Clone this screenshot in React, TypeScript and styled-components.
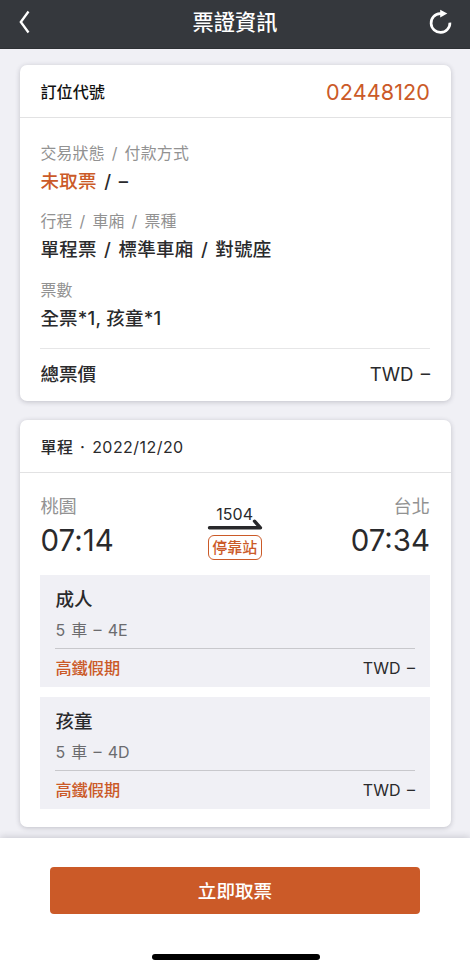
import React from 'react';
import styled, { createGlobalStyle } from 'styled-components';

const ORANGE = '#cb5a28';

const GlobalStyle = createGlobalStyle`
  * { box-sizing: border-box; }
  body {
    margin: 0;
    background: #f0f0f5;
    font-family: Inter, 'Noto Sans CJK TC', sans-serif;
    color: #2a2a2c;
  }
`;

const Screen = styled.div`
  width: 470px;
  height: 970px;
  display: flex;
  flex-direction: column;
  background: #f0f0f5;
  overflow: hidden;
`;

const NavBar = styled.header`
  height: 49px;
  flex: none;
  display: grid;
  grid-template-columns: 60px 1fr 60px;
  align-items: center;
  background: #35383d;
  border-bottom: 1px solid #2d3034;
  color: #fff;
`;

const NavTitle = styled.h1`
  margin: 0;
  padding-bottom: 4px;
  text-align: center;
  font-size: 21.2px;
  line-height: 30px;
  font-weight: 500;
`;

const NavButton = styled.button<{ $end?: boolean }>`
  display: flex;
  justify-content: ${(p) => (p.$end ? 'flex-end' : 'flex-start')};
  padding: ${(p) => (p.$end ? '0 17px 4px 0' : '0 0 5px 17px')};
  border: 0;
  background: none;
  color: inherit;
`;

const Content = styled.main`
  flex: none;
  height: 789px;
  padding: 16px 19px 0 20px;
  display: flex;
  flex-direction: column;
  gap: 19px;
`;

const Card = styled.section<{ $height: number }>`
  height: ${(p) => p.$height}px;
  flex: none;
  background: #fff;
  border-radius: 7px;
  box-shadow: 0 1px 5px rgba(40, 40, 60, 0.24);
`;

const CardHeader = styled.div`
  height: 53px;
  padding: 2px 21px 0 20.5px;
  display: flex;
  align-items: center;
  justify-content: space-between;
  border-bottom: 1px solid #e2e2e3;
`;

const CardBody = styled.div<{ $top: number }>`
  padding: ${(p) => p.$top}px 21px 0 20.4px;
`;

const Text = styled.span<{
  $size: number;
  $line?: number;
  $weight?: number;
  $color?: string;
  $track?: number;
  $gap?: number;
}>`
  display: block;
  white-space: pre;
  font-size: ${(p) => p.$size}px;
  line-height: ${(p) => p.$line ?? 24}px;
  font-weight: ${(p) => p.$weight ?? 400};
  color: ${(p) => p.$color ?? 'inherit'};
  letter-spacing: ${(p) => p.$track ?? 0}px;
  word-spacing: ${(p) => p.$gap ?? 0}px;
  margin-right: ${(p) => -(p.$track ?? 0)}px;
`;

const Accent = styled.span`
  color: ${ORANGE};
`;

const Regular = styled.span`
  font-weight: 400;
`;

const Field = styled.div`
  height: 68.4px;
`;

const TotalRow = styled.div`
  height: 51px;
  margin-top: 1px;
  display: flex;
  align-items: center;
  justify-content: space-between;
  border-top: 1px solid #e6e6e7;
`;

const Journey = styled.div`
  height: 81px;
  display: flex;
  justify-content: space-between;
`;

const Station = styled.div<{ $end?: boolean }>`
  width: 90px;
  display: flex;
  flex-direction: column;
  align-items: ${(p) => (p.$end ? 'flex-end' : 'flex-start')};
`;

const Train = styled.div`
  display: flex;
  flex-direction: column;
  align-items: center;
  padding: 8px 1px 0 0;
`;

const Arrow = styled.svg`
  display: block;
  margin-top: -8px;
`;

const StopsButton = styled.button`
  width: 54px;
  height: 25px;
  margin-top: 5px;
  padding: 0;
  border: 1.5px solid ${ORANGE};
  border-radius: 6px;
  background: #fff;
  color: ${ORANGE};
  font: 500 15px/21px Inter, 'Noto Sans CJK TC', sans-serif;
`;

const Passenger = styled.div`
  height: 112px;
  margin-bottom: 10px;
  padding: 11px 15px 0;
  background: #f0f0f5;
`;

const PassengerInfo = styled.div`
  height: 63px;
  border-bottom: 1px solid #c8c8cc;
`;

const FareRow = styled.div`
  height: 37px;
  display: flex;
  align-items: center;
  justify-content: space-between;
`;

const Footer = styled.footer`
  flex: 1;
  display: flex;
  flex-direction: column;
  align-items: center;
  padding-top: 29px;
  background: #fff;
  box-shadow: 0 -1px 7px rgba(40, 40, 60, 0.2);
`;

const PrimaryButton = styled.button`
  width: 370px;
  height: 47px;
  padding: 2px 0 0;
  border: 0;
  border-radius: 4px;
  background: ${ORANGE};
  color: #fff;
  font: 500 18.6px/45px Inter, 'Noto Sans CJK TC', sans-serif;
`;

const HomeIndicator = styled.div`
  width: 168px;
  height: 6px;
  margin: 40px 0 0 2px;
  border-radius: 3px;
  background: #000;
`;

const fields = [
  { label: '交易狀態 / 付款方式', accent: '未取票', value: ' / –', track: 0.3, gap: 2.2 },
  { label: '行程 / 車廂 / 票種', accent: '', value: '單程票 / 標準車廂 / 對號座', track: 0.25, gap: 2.2 },
  { label: '票數', accent: '', value: '全票*1, 孩童*1', track: 0.2, gap: 0 },
];

const passengers = [
  { type: '成人', seat: '5 車 – 4E' },
  { type: '孩童', seat: '5 車 – 4D' },
];

export default function App() {
  return (
    <>
      <GlobalStyle />
      <Screen>
        <NavBar>
          <NavButton aria-label="返回">
            <svg width="14" height="24" viewBox="0 0 14 24" fill="none" stroke="currentColor" strokeWidth="2.3">
              <path d="M11.5 1.5 3.8 12l7.7 10.5" />
            </svg>
          </NavButton>
          <NavTitle>票證資訊</NavTitle>
          <NavButton $end aria-label="重新整理">
            <svg width="26" height="26" viewBox="0 0 26 26" fill="none">
              <path d="M14.5 4.6H13A9.4 9.4 0 1 0 22.9 13.6" stroke="currentColor" strokeWidth="2.7" />
              <path d="M13.2 0.7 20.3 4.6 13.2 8.6Z" fill="currentColor" />
            </svg>
          </NavButton>
        </NavBar>

        <Content>
          <Card $height={336}>
            <CardHeader>
              <Text $size={16.1} $weight={500} $color="#111">訂位代號</Text>
              <Text $size={21.6} $color={ORANGE} $track={0.1}>02448120</Text>
            </CardHeader>
            <CardBody $top={24}>
              {fields.map((f) => (
                <Field key={f.label}>
                  <Text $size={15.9} $color="#929292" $track={0.2} $gap={2.3}>{f.label}</Text>
                  <Text $size={18.5} $line={31.5} $weight={450} $track={f.track} $gap={f.gap}>
                    {f.accent && <Accent>{f.accent}</Accent>}
                    {f.value}
                  </Text>
                </Field>
              ))}
              <TotalRow>
                <Text $size={18.6} $weight={500}>總票價</Text>
                <Text $size={18.6} $gap={2}>TWD –</Text>
              </TotalRow>
            </CardBody>
          </Card>

          <Card $height={407}>
            <CardHeader>
              <Text $size={16} $weight={500} $track={0.45} $gap={2}>
                單程 · <Regular>2022/12/20</Regular>
              </Text>
            </CardHeader>
            <CardBody $top={21}>
              <Journey>
                <Station>
                  <Text $size={18.2} $color="#929292">桃園</Text>
                  <Text $size={29.4} $line={46} $track={0.1}>07:14</Text>
                </Station>
                <Train>
                  <Text $size={16} $track={0.1}>1504</Text>
                  <Arrow width="56" height="12" viewBox="0 0 56 12" fill="none" stroke="#29292b" strokeWidth="3.4" strokeLinecap="round">
                    <path d="M2.5 9.8H53.5L47.5 3.2" strokeLinejoin="round" />
                  </Arrow>
                  <StopsButton>停靠站</StopsButton>
                </Train>
                <Station $end>
                  <Text $size={18.2} $color="#929292">台北</Text>
                  <Text $size={29.4} $line={46}>07:34</Text>
                </Station>
              </Journey>
              {passengers.map((p) => (
                <Passenger key={p.type}>
                  <PassengerInfo>
                    <Text $size={18.5} $line={26} $weight={500}>{p.type}</Text>
                    <Text $size={16} $line={36} $color="#6b6b6e" $gap={1.7}>{p.seat}</Text>
                  </PassengerInfo>
                  <FareRow>
                    <Text $size={16.2} $weight={500} $color={ORANGE}>高鐵假期</Text>
                    <Text $size={16} $gap={2}>TWD –</Text>
                  </FareRow>
                </Passenger>
              ))}
            </CardBody>
          </Card>
        </Content>

        <Footer>
          <PrimaryButton>立即取票</PrimaryButton>
          <HomeIndicator />
        </Footer>
      </Screen>
    </>
  );
}
